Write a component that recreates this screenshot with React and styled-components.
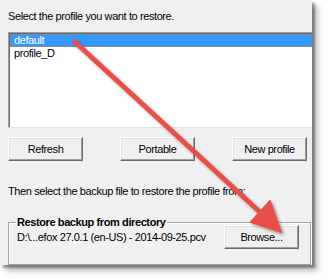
import styled, { createGlobalStyle } from "styled-components";

const GlobalStyle = createGlobalStyle`
  html, body {
    margin: 0;
    padding: 0;
    background: #ffffff;
  }
  body {
    font-family: "Liberation Sans", Arial, sans-serif;
    font-size: 11px;
    letter-spacing: -0.4px;
    color: #000;
  }
`;

const Page = styled.div`
  width: 328px;
  height: 280px;
  position: relative;
`;

const Dialog = styled.div`
  position: relative;
  width: 312px;
  height: 265px;
  box-sizing: border-box;
  padding: 8px 0 0 8px;
  background: #f0f0f0;
  overflow: hidden;
  box-shadow: 3px 3px 2px rgba(0, 0, 0, 0.35), 6px 6px 6px rgba(0, 0, 0, 0.25);
  display: flex;
  flex-direction: column;
`;

const Caption = styled.div`
  height: 16px;
  line-height: 16px;
  white-space: nowrap;
  margin: ${p => p.$mt || 0}px 0 0 0;
`;

const ListBox = styled.ul`
  list-style: none;
  margin: 8px 0 0 0;
  padding: 1px;
  width: 312px;
  height: 96px;
  box-sizing: border-box;
  background: #fff;
  border-top: 1px solid #a0a0a0;
  border-left: 1px solid #a0a0a0;
  border-bottom: 1px solid #e3e3e3;
  box-shadow: inset 1px 1px 0 #696969;
`;

const Item = styled.li`
  height: 13px;
  line-height: 13px;
  padding-left: 4px;
  box-sizing: border-box;
  background: ${p => (p.$selected ? "#3399ff" : "transparent")};
  color: ${p => (p.$selected ? "#fff" : "#000")};
  outline: ${p => (p.$selected ? "1px dotted #d07a2a" : "none")};
  outline-offset: -1px;
`;

const ButtonRow = styled.div`
  display: flex;
  justify-content: space-between;
  width: 299px;
  margin-top: 9px;
`;

const Button = styled.button`
  width: 75px;
  height: 24px;
  padding: 0;
  font: inherit;
  letter-spacing: inherit;
  color: #000;
  background: #f0f0f0;
  border: 1px solid;
  border-color: #ffffff #696969 #696969 #ffffff;
  box-shadow: inset -1px -1px 0 #a0a0a0, inset 1px 1px 0 #e3e3e3;
`;

const Group = styled.fieldset`
  margin: 17px 0 0 0;
  width: 303px;
  height: 49px;
  box-sizing: border-box;
  padding: 0 0 0 8px;
  border: 1px solid #a0a0a0;
  box-shadow: 1px 1px 0 #ffffff, inset 1px 1px 0 #ffffff;
  display: flex;
  align-items: center;
  justify-content: space-between;
`;

const Legend = styled.legend`
  font-weight: bold;
  padding: 0 1px;
  margin-left: -1px;
  line-height: 12px;
`;

const PathText = styled.span`
  white-space: nowrap;
  margin-top: -3px;
`;

const BrowseButton = styled(Button)`
  flex: none;
  margin-right: 11px;
  margin-top: -3px;
`;

const ArrowLayer = styled.svg`
  position: absolute;
  left: 0;
  top: 0;
  pointer-events: none;
`;

function Arrow() {
  return (
    <ArrowLayer width="328" height="280" viewBox="0 0 328 280">
      <defs>
        <filter id="sh" x="-20%" y="-20%" width="140%" height="140%">
          <feDropShadow dx="2" dy="2" stdDeviation="1.5" floodColor="#000" floodOpacity="0.35" />
        </filter>
      </defs>
      <g filter="url(#sh)" fill="#e8504a" stroke="#e8504a">
        <line x1="75" y1="42" x2="262" y2="214" strokeWidth="5" strokeLinecap="round" />
        <polygon points="281,232 251,222 270,201" strokeWidth="2" strokeLinejoin="round" />
      </g>
    </ArrowLayer>
  );
}

export default function App() {
  return (
    <Page>
      <GlobalStyle />
      <Dialog>
        <Caption>Select the profile you want to restore.</Caption>
        <ListBox>
          <Item $selected>default</Item>
          <Item>profile_D</Item>
        </ListBox>
        <ButtonRow>
          <Button>Refresh</Button>
          <Button>Portable</Button>
          <Button>New profile</Button>
        </ButtonRow>
        <Caption $mt={22}>Then select the backup file to restore the profile from:</Caption>
        <Group>
          <Legend>Restore backup from directory</Legend>
          <PathText>D:\...efox 27.0.1 (en-US) - 2014-09-25.pcv</PathText>
          <BrowseButton>Browse...</BrowseButton>
        </Group>
      </Dialog>
      <Arrow />
    </Page>
  );
}
